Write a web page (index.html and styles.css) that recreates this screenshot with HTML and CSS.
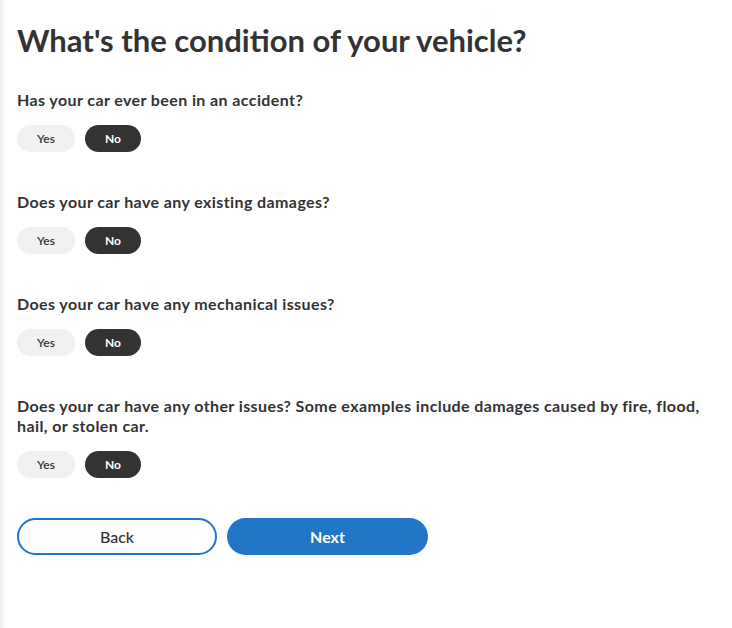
FILE: index.html
```html
<!DOCTYPE html>
<html lang="en">
<head>
<meta charset="utf-8">
<title>Vehicle condition</title>
<link rel="stylesheet" href="styles.css">
</head>
<body>
<main class="page">
  <h1 class="title">What's the condition of your vehicle?</h1>

  <section class="question">
    <p class="question-text">Has your car ever been in an accident?</p>
    <div class="options">
      <button class="pill">Yes</button>
      <button class="pill pill-active">No</button>
    </div>
  </section>

  <section class="question">
    <p class="question-text">Does your car have any existing damages?</p>
    <div class="options">
      <button class="pill">Yes</button>
      <button class="pill pill-active">No</button>
    </div>
  </section>

  <section class="question">
    <p class="question-text">Does your car have any mechanical issues?</p>
    <div class="options">
      <button class="pill">Yes</button>
      <button class="pill pill-active">No</button>
    </div>
  </section>

  <section class="question">
    <p class="question-text">Does your car have any other issues? Some examples include damages caused by fire, flood, hail, or stolen car.</p>
    <div class="options">
      <button class="pill">Yes</button>
      <button class="pill pill-active">No</button>
    </div>
  </section>

  <div class="actions">
    <button class="btn btn-outline">Back</button>
    <button class="btn btn-primary">Next</button>
  </div>
</main>
</body>
</html>
```

FILE: styles.css
```css
html, body {
  margin: 0;
  padding: 0;
  height: 100%;
}

body {
  background: linear-gradient(to right, #ececec 0, #f7f7f7 3px, #ffffff 7px);
  font-family: Lato, "Noto Sans", sans-serif;
  color: #333333;
}

.page {
  padding: 20px 17px 0 17px;
  max-width: 698px;
}

.title {
  margin: 0 0 30px 0;
  font-size: 31px;
  line-height: 40px;
  font-weight: 700;
  color: #333333;
}

.question {
  margin-bottom: 40px;
}

.question-text {
  margin: 0 0 15px 0;
  font-size: 16px;
  line-height: 20px;
  letter-spacing: 0.4px;
  font-weight: 700;
  color: #333333;
}

.options {
  display: flex;
  gap: 10px;
}

.pill {
  height: 27px;
  border: none;
  border-radius: 14px;
  padding: 0;
  font-family: inherit;
  font-size: 12px;
  font-weight: 600;
  background: #f1f1f1;
  color: #333333;
  width: 58px;
}

.pill-active {
  width: 56px;
  background: #333333;
  color: #ffffff;
  font-weight: 700;
}

.actions {
  display: flex;
  gap: 10px;
  margin-top: 40px;
}

.btn {
  width: 201px;
  height: 37px;
  border-radius: 19px;
  font-family: inherit;
  font-size: 16px;
  padding: 0;
}

.btn-outline {
  width: 200px;
  background: #ffffff;
  border: 2px solid #2176c7;
  color: #333333;
  font-weight: 500;
}

.btn-primary {
  background: #2176c7;
  border: none;
  color: #ffffff;
  font-weight: 700;
}
```
